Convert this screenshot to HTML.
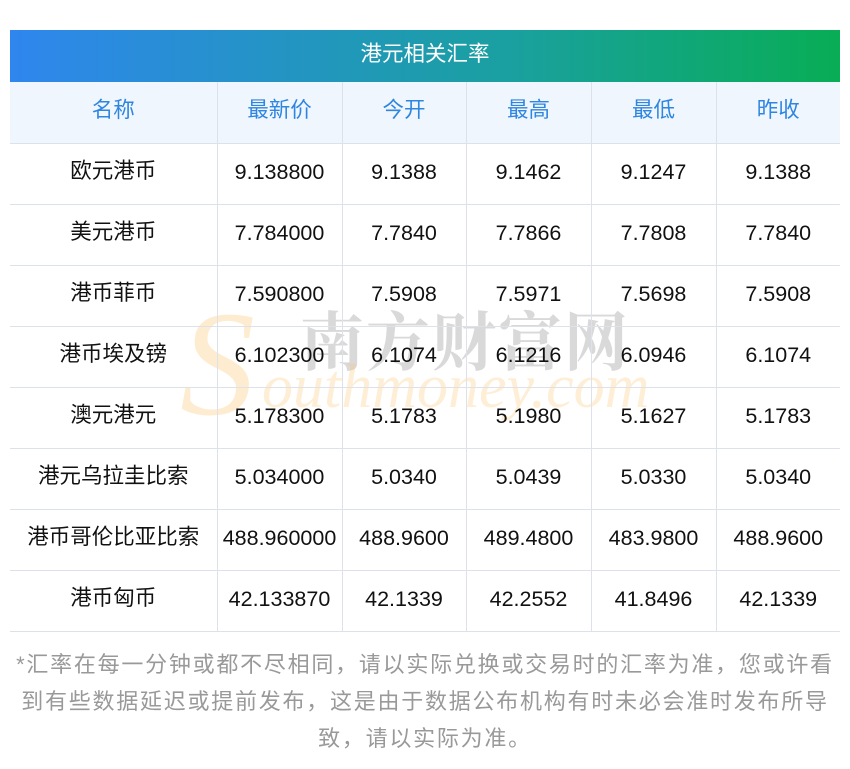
<!DOCTYPE html>
<html><head><meta charset="utf-8"><style>
body{margin:0;width:850px;height:769px;background:#fff;font-family:"Liberation Sans","Noto Sans CJK SC",sans-serif;position:relative;overflow:hidden}
.title{position:absolute;left:10px;top:30px;width:830px;height:52px;background:linear-gradient(90deg,#2f86ee,#1aa0a0 60%,#08ad55);color:#fff;font-size:21.5px;text-align:center;line-height:48px}
table{position:absolute;left:10px;top:82px;border-collapse:collapse;width:830px;table-layout:fixed}
td{border:1px solid #dde1ea;height:61px;text-align:center;font-size:21.5px;color:#111;padding:0 0 3px 0;box-sizing:border-box}
td:first-child{padding-bottom:9px}
tr:first-child td{border-top:none}
tr td:first-child{border-left:none}
tr td:last-child{border-right:none}
th{background:#f0f6fe;color:#2f86e0;font-weight:normal;font-size:21.5px;height:61px;border:1px solid #dde1ea;border-top:none;padding:0 0 7px 0;box-sizing:border-box}
th:first-child{border-left:none}th:last-child{border-right:none}
.note{position:absolute;left:0;top:646px;width:850px;text-align:center;color:#999;font-size:22px;line-height:37px;letter-spacing:1.75px;white-space:nowrap}
.wm{position:absolute;pointer-events:none;white-space:nowrap}
</style></head><body>
<div class="title">港元相关汇率</div>
<div class="wm" style="left:300px;top:292px;font-size:64px;color:rgba(170,170,170,.45);font-family:'Noto Serif CJK SC',serif;letter-spacing:2px;font-weight:bold">南方财富网</div>
<div class="wm" style="left:262px;top:352px;font-size:62px;color:rgba(253,200,120,.3);font-style:italic;font-family:'Liberation Serif',serif">outhmoney.com</div>
<div class="wm" style="left:180px;top:294px;font-size:150px;line-height:140px;color:rgba(253,200,120,.35);font-style:italic;font-family:'Liberation Serif',serif">S</div>
<table>
<colgroup><col style="width:207px"><col style="width:125px"><col style="width:124px"><col style="width:125px"><col style="width:125px"><col style="width:124px"></colgroup>
<tr><th>名称</th><th>最新价</th><th>今开</th><th>最高</th><th>最低</th><th>昨收</th></tr>
<tr><td>欧元港币</td><td>9.138800</td><td>9.1388</td><td>9.1462</td><td>9.1247</td><td>9.1388</td></tr>
<tr><td>美元港币</td><td>7.784000</td><td>7.7840</td><td>7.7866</td><td>7.7808</td><td>7.7840</td></tr>
<tr><td>港币菲币</td><td>7.590800</td><td>7.5908</td><td>7.5971</td><td>7.5698</td><td>7.5908</td></tr>
<tr><td>港币埃及镑</td><td>6.102300</td><td>6.1074</td><td>6.1216</td><td>6.0946</td><td>6.1074</td></tr>
<tr><td>澳元港元</td><td>5.178300</td><td>5.1783</td><td>5.1980</td><td>5.1627</td><td>5.1783</td></tr>
<tr><td>港元乌拉圭比索</td><td>5.034000</td><td>5.0340</td><td>5.0439</td><td>5.0330</td><td>5.0340</td></tr>
<tr><td>港币哥伦比亚比索</td><td>488.960000</td><td>488.9600</td><td>489.4800</td><td>483.9800</td><td>488.9600</td></tr>
<tr><td>港币匈币</td><td>42.133870</td><td>42.1339</td><td>42.2552</td><td>41.8496</td><td>42.1339</td></tr>
</table>
<div class="note">*汇率在每一分钟或都不尽相同，请以实际兑换或交易时的汇率为准，您或许看<br>到有些数据延迟或提前发布，这是由于数据公布机构有时未必会准时发布所导<br>致，请以实际为准。</div>
</body></html>
